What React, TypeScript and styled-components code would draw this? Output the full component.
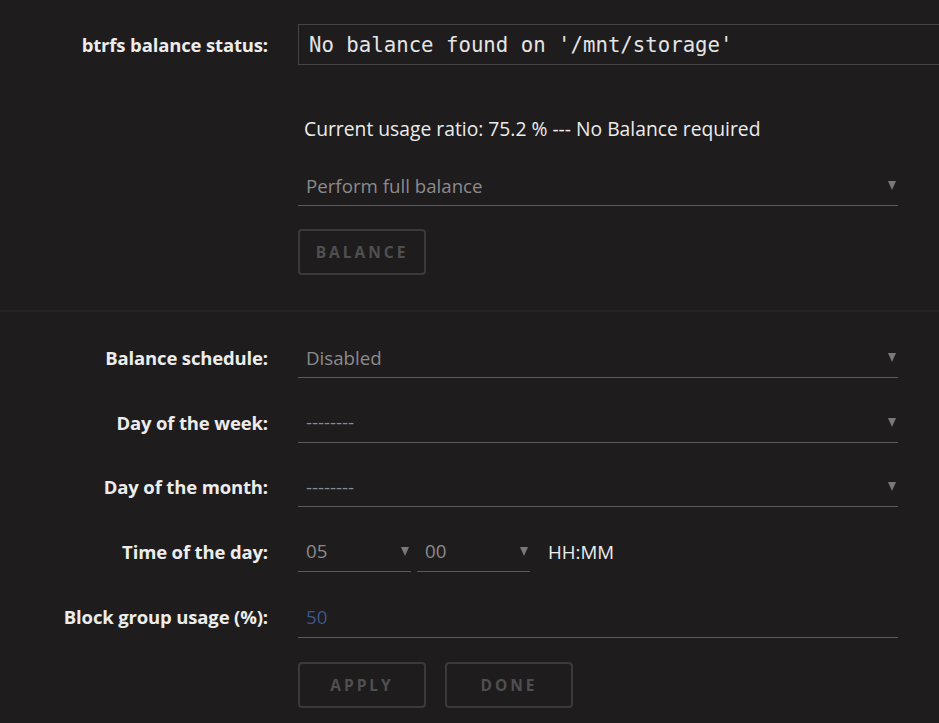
import React from "react"
import styled, { createGlobalStyle } from "styled-components"

const GlobalStyle = createGlobalStyle`
    html, body {
        margin: 0;
        padding: 0;
        background: #1e1c1d;
        overflow: hidden;
    }
    body {
        font-family: "Open Sans", "Noto Sans", sans-serif;
        color: #e8e8e8;
    }
`

type SelectProps = { value: string; width?: number }

const Select = ({ value, width }: SelectProps) => (
    <SelectBox style={width ? { width } : undefined}>
        <SelectText>{value}</SelectText>
        <Arrow />
    </SelectBox>
)

const App = () => {
    return (
        <Page>
            <GlobalStyle />
            <Section>
                <Row>
                    <Label>btrfs balance status:</Label>
                    <StatusBox>No balance found on '/mnt/storage'</StatusBox>
                </Row>
                <Row>
                    <span />
                    <Info>Current usage ratio: 75.2 % --- No Balance required</Info>
                </Row>
                <Row>
                    <span />
                    <Select value="Perform full balance" />
                </Row>
                <Row>
                    <span />
                    <Button>BALANCE</Button>
                </Row>
            </Section>
            <Divider />
            <Section $second>
                <Row>
                    <Label>Balance schedule:</Label>
                    <Select value="Disabled" />
                </Row>
                <Row>
                    <Label>Day of the week:</Label>
                    <Select value="--------" />
                </Row>
                <Row>
                    <Label>Day of the month:</Label>
                    <Select value="--------" />
                </Row>
                <Row>
                    <Label>Time of the day:</Label>
                    <TimeGroup>
                        <Select value="05" width={113} />
                        <Select value="00" width={113} />
                        <Hint>HH:MM</Hint>
                    </TimeGroup>
                </Row>
                <Row>
                    <Label>Block group usage (%):</Label>
                    <NumberInput>50</NumberInput>
                </Row>
                <Row>
                    <span />
                    <Buttons>
                        <Button>APPLY</Button>
                        <Button>DONE</Button>
                    </Buttons>
                </Row>
            </Section>
        </Page>
    )
}

export default App

const Page = styled.div`
    width: 939px;
    height: 723px;
    overflow: hidden;
`

const Section = styled.div<{ $second?: boolean }>`
    display: flex;
    flex-direction: column;
    padding-top: ${p => (p.$second ? "25px" : "24px")};
    padding-bottom: ${p => (p.$second ? "0" : "35px")};
    gap: ${p => (p.$second ? "23.6px" : "0")};

    ${p =>
        !p.$second &&
        `
        & > div:nth-child(2) { margin-top: 52px; }
        & > div:nth-child(3) { margin-top: 24px; }
        & > div:nth-child(4) { margin-top: 23px; }
    `}
`

const Row = styled.div`
    display: grid;
    grid-template-columns: 268px 1fr;
    column-gap: 30px;
    align-items: center;
`

const Label = styled.label`
    text-align: right;
    font-weight: 700;
    font-size: 18.5px;
    color: #ececec;
    letter-spacing: -0.15px;
    white-space: nowrap;
`

const StatusBox = styled.div`
    width: 700px;
    height: 41px;
    box-sizing: border-box;
    border: 1px solid #464546;
    padding: 0 10px;
    display: flex;
    align-items: center;
    font-family: "DejaVu Sans Mono", "Liberation Mono", monospace;
    font-size: 20.7px;
    color: #e4e4e4;
    white-space: nowrap;
`

const Info = styled.div`
    font-size: 19.3px;
    line-height: 24px;
    padding-left: 6px;
    color: #ececec;
    white-space: nowrap;
`

const SelectBox = styled.div`
    position: relative;
    width: 600px;
    height: 41px;
    box-sizing: border-box;
    border-bottom: 1px solid #5a595a;
    display: flex;
    align-items: center;
    padding-left: 8px;
`

const SelectText = styled.span`
    font-size: 18.7px;
    color: #8c8b8c;
`

const Arrow = styled.span`
    position: absolute;
    right: 2px;
    top: 16px;
    width: 0;
    height: 0;
    border-left: 4.5px solid transparent;
    border-right: 4.5px solid transparent;
    border-top: 9px solid #7a797a;
`

const TimeGroup = styled.div`
    display: flex;
    align-items: center;
    gap: 6px;
`

const Hint = styled.span`
    margin-left: 12px;
    font-size: 18.7px;
    color: #ececec;
`

const NumberInput = styled.div`
    width: 600px;
    height: 43px;
    box-sizing: border-box;
    border-bottom: 1px solid #5a595a;
    display: flex;
    align-items: center;
    padding-left: 8px;
    font-size: 18.7px;
    color: #3c5688;
`

const Buttons = styled.div`
    display: flex;
    gap: 19px;
`

const Button = styled.button`
    width: 128px;
    height: 46px;
    box-sizing: border-box;
    background: transparent;
    border: 2px solid #3b3a3b;
    border-radius: 4px;
    font-family: "Open Sans", "Noto Sans", sans-serif;
    font-weight: 700;
    font-size: 15.5px;
    letter-spacing: 3px;
    color: #504f50;
    padding: 0;
`

const Divider = styled.div`
    height: 2px;
    background: #262526;
`
